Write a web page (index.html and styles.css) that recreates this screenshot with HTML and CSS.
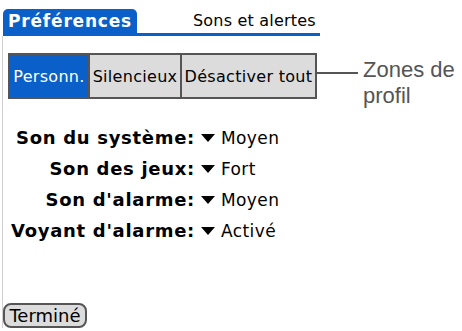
FILE: index.html
```html
<!DOCTYPE html>
<html lang="fr">
<head>
<meta charset="utf-8">
<link rel="stylesheet" href="styles.css">
</head>
<body>
<div class="screen">
  <div class="header">
    <div class="tab">Préférences</div>
    <div class="title">Sons et alertes</div>
  </div>
  <div class="content">
    <div class="seg-row">
      <div class="seg">
        <div class="seg-item active">Personn.</div>
        <div class="seg-item">Silencieux</div>
        <div class="seg-item">Désactiver tout</div>
      </div>
      <div class="connector"></div>
      <div class="note">Zones de<br>profil</div>
    </div>
    <div class="rows">
      <div class="label">Son du système:</div><div class="val"><span class="arrow"></span>Moyen</div>
      <div class="label">Son des jeux:</div><div class="val"><span class="arrow"></span>Fort</div>
      <div class="label">Son d'alarme:</div><div class="val"><span class="arrow"></span>Moyen</div>
      <div class="label">Voyant d'alarme:</div><div class="val"><span class="arrow"></span>Activé</div>
    </div>
    <div class="footer">
      <div class="done">Terminé</div>
    </div>
  </div>
</div>
</body>
</html>
```
FILE: styles.css
```css
html, body {
  margin: 0;
  padding: 0;
  background: #fff;
}
.screen {
  width: 462px;
  height: 331px;
  font-family: "DejaVu Sans", sans-serif;
  color: #000;
}
.header {
  display: flex;
  align-items: flex-end;
  padding-top: 9px;
  margin-left: 3px;
  width: 317px;
  border-bottom: 3px solid #0a60c8;
  height: 24px;
}
.tab {
  width: 134px;
  height: 24px;
  background: #0a60c8;
  color: #fff;
  font-weight: bold;
  font-size: 17px;
  line-height: 25px;
  text-align: center;
  border-radius: 5px 5px 0 0;
  letter-spacing: 0.8px;
}
.title {
  margin-left: 56px;
  font-size: 16px;
  line-height: 24px;
  letter-spacing: 0.2px;
}
.content {
  margin-left: 2px;
  border-left: 1px solid #d0d0d0;
  height: 292px;
  display: flex;
  flex-direction: column;
}
.seg-row {
  display: flex;
  align-items: flex-start;
  margin-top: 17px;
  margin-left: 5px;
}
.seg {
  display: flex;
  border: 2px solid #555;
  height: 42px;
  background: #555;
  gap: 2px;
}
.seg-item {
  background: #dcdcdc;
  font-size: 16px;
  line-height: 44px;
  text-align: center;
  letter-spacing: 0.3px;
}
.seg-item:nth-child(1) { width: 78px; }
.seg-item:nth-child(2) { width: 90px; }
.seg-item:nth-child(3) { width: 133px; }
.seg-item.active {
  background: #0a60c8;
  color: #fff;
}
.connector {
  width: 41px;
  height: 2px;
  background: #555;
  margin-top: 19px;
}
.note {
  margin-left: 5px;
  margin-top: 4px;
  font-family: "Liberation Sans", Arial, sans-serif;
  font-size: 22px;
  line-height: 26px;
  color: #555;
}
.rows {
  display: grid;
  grid-template-columns: 192px auto;
  column-gap: 6px;
  row-gap: 9px;
  margin-top: 18px;
  font-size: 17px;
  line-height: 22px;
}
.label {
  text-align: right;
  font-weight: bold;
  font-size: 18px;
  letter-spacing: 0.7px;
}
.val {
  display: flex;
  align-items: center;
  letter-spacing: 0.4px;
}
.arrow {
  width: 0;
  height: 0;
  border-left: 7px solid transparent;
  border-right: 7px solid transparent;
  border-top: 8px solid #000;
  margin-right: 6px;
}
.footer {
  margin-top: auto;
}
.done {
  display: inline-block;
  width: 80px;
  height: 21px;
  border: 2px solid #555;
  border-radius: 8px;
  background: #dcdcdc;
  font-size: 18px;
  line-height: 22px;
  text-align: center;
}
```
